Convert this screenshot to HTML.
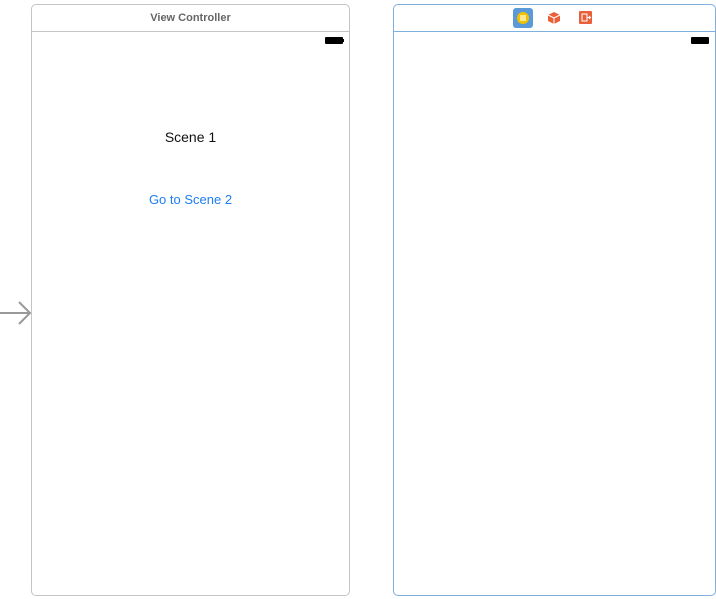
<html><head><style>
body{margin:0;width:716px;height:599px;background:#fff;position:relative;font-family:"Liberation Sans",sans-serif;overflow:hidden}
.f{position:absolute;box-sizing:border-box;border-radius:5px}
</style></head><body>
<div class="f" style="left:31px;top:4px;width:319px;height:592px;border:1px solid #c4c4c4">
 <div style="height:26px;border-bottom:1px solid #c4c4c4;text-align:center;font-size:11px;font-weight:bold;color:#666;line-height:27px">View Controller</div>
 <div style="position:absolute;right:6px;top:32px;width:18px;height:7px;background:#000;border-radius:1px"></div>
 <div style="position:absolute;right:5px;top:34px;width:1px;height:3px;background:#000"></div>
 <div style="position:absolute;left:0;width:100%;top:124px;text-align:center;font-size:14px;color:#111">Scene 1</div>
 <div style="position:absolute;left:0;width:100%;top:187px;text-align:center;font-size:13px;color:#1e7ef0">Go to Scene 2</div>
</div>
<svg style="position:absolute;left:0;top:298px" width="32" height="30"><path d="M0 15H30M19 4L30 15L19 26" stroke="#999" stroke-width="2" fill="none"/></svg>
<div class="f" style="left:393px;top:4px;width:323px;height:592px;border:1px solid #7fb0e0">
 <div style="height:26px;border-bottom:1px solid #7fb0e0"></div>
 <div style="position:absolute;right:6px;top:32px;width:18px;height:7px;background:#000;border-radius:1px"></div>
</div>
<div style="position:absolute;left:513px;top:8px;width:20px;height:20px;background:#5a9ad8;border-radius:3px"></div>
<div style="position:absolute;left:517px;top:12px;width:12px;height:12px;background:#f2c200;border-radius:50%"></div>
<div style="position:absolute;left:520px;top:15px;width:6px;height:6px;background:#fbe890"></div>
<svg style="position:absolute;left:547px;top:11px" width="14" height="14"><path d="M7 1L13 4V10L7 13L1 10V4Z" fill="#e8603a"/><path d="M1 4L7 7L13 4M7 7V13" stroke="#fff" stroke-width="1" fill="none"/></svg>
<svg style="position:absolute;left:579px;top:11px" width="14" height="14"><rect x="0" y="0" width="13" height="13" fill="#e8603a" rx="1"/><path d="M3 3H8V10H3ZM8 6.5H11M10 5L11.5 6.5L10 8" stroke="#fff" fill="none"/></svg>
</body></html>
